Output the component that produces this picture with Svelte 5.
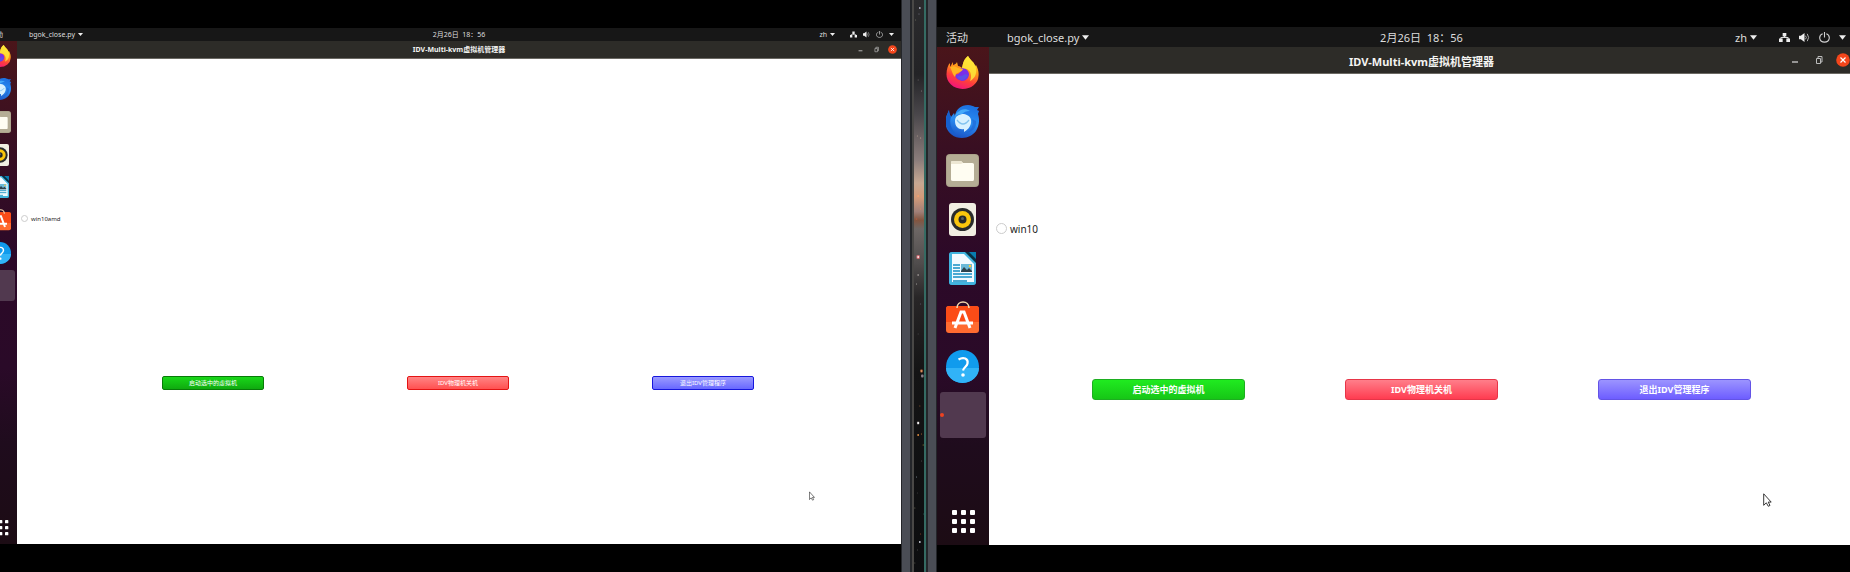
<script>
  const screens = [
    { id: 'small', vm: 'win10amd' },
    { id: 'large', vm: 'win10' }
  ];
  const apps = ['Firefox', 'Thunderbird', 'Files', 'Rhythmbox', 'Writer', 'Software', 'Help', 'Running'];
  const dots = [6, 15, 24];
  const stars = [
    [6, 8, 2, '#aab'], [5, 14, 1, '#889'], [1, 20, 1, '#776'], [12, 68, 1, '#8aa'],
    [4, 80, 1, '#776f70'], [8, 91, 1, '#8a8584'], [3, 136, 1, '#b5a090'], [7, 138, 1, '#d0b0a0'],
    [4, 196, 2, '#f0a070'], [7, 209, 1, '#e58b5a'], [2, 219, 2, '#a55c42'],
    [4, 257, 4, '#c96a70'], [4, 257, 2, '#ffe4e4'], [4, 275, 2, '#8a8583'], [2, 284, 1, '#c0bcb8'],
    [7, 304, 1, '#667'], [4, 334, 1, '#555'], [8, 371, 3, '#b96b3e'], [8, 371, 1, '#ffd0a0'],
    [9, 376, 3, '#8b7f8a'], [6, 406, 1, '#a06a3d'], [4, 423, 3, '#77716f'], [4, 423, 2, '#fff'],
    [4, 435, 2, '#d9883c'], [8, 434, 1, '#c17635'], [10, 445, 1, '#b7a544'], [8, 461, 1, '#555'],
    [2, 477, 1, '#8b9aa5'], [3, 493, 1, '#444'], [0, 508, 1, '#7c7a62'], [11, 514, 1, '#47a08c'],
    [7, 534, 1, '#9a5030'], [6, 542, 2, '#c4c8d4'], [3, 550, 1, '#555'], [0, 563, 1, '#665']
  ];
</script>

{#snippet appIcon(name, id)}
  <svg class="app-icon" viewBox="0 0 33 33" aria-hidden="true">
    {#if name === 'Firefox'}
      <defs>
        <linearGradient id="fx-{id}" x1="0.75" y1="0" x2="0.35" y2="1">
          <stop offset="0" stop-color="#fff22c" /><stop offset="0.4" stop-color="#ff9a1a" />
          <stop offset="0.7" stop-color="#ff3f3b" /><stop offset="1" stop-color="#f2127e" />
        </linearGradient>
      </defs>
      <path fill="url(#fx-{id})" d="M22 0c2 3 3 4 5 6 1 1 1.500 2 2 4l1-1c2 4 3 7 2.500 11A16 13.500 0 0 1 16.500 33 16 14.500 0 0 1 .500 18C.500 13 2 9 4 7v4l3-5v3c2-1 3-1 4-3l1 4c2 0 3 1 4 2 1-5 2-9 6-12z" />
      <path fill="#7b2ee8" d="M12 14c4-3 10-2 11 4 0 4-3 7-7 7-4-1-7-3-7-7 2 1 4 0 5-2z" />
      <path fill="#4c63e8" d="M11 19c2 2 6 1 8-1l3 1c-1 4-4 5-6 5-3 0-5-2-5-5z" opacity=".65" />
      <path fill="#ffb522" d="M4 11c3-1 5-1 8 1l5 1c-1 3-4 3-7 5l-1 3C6 18 6 14 4 11z" />
      <path fill="#ffe83a" d="M22 0c2 4 7 7 8 12 1 7-2 11-6 13 2-5 1-10-3-12l-5-1c1-5 2-9 6-12z" opacity=".85" />
    {:else if name === 'Thunderbird'}
      <defs>
        <linearGradient id="tb-{id}" x1="0.7" y1="0" x2="0.4" y2="1">
          <stop offset="0" stop-color="#1c6fe0" /><stop offset="0.5" stop-color="#2a8df2" />
          <stop offset="1" stop-color="#1a52c4" />
        </linearGradient>
      </defs>
      <path fill="url(#tb-{id})" d="M9 11C10 4 15 0 22 0c3 0 5 1 7 2l4 0-2 3 2 1-1 3c2 6 1 12-2 17-3 4-8 7-14 7C7 33 0 27-.500 18-.700 13 1 10 3 5c0 3 1 5 2 7l3-4z" />
      <path fill="#1560cf" d="M3 5c0 3 1 5 2 7-2 6 0 12 5 17C4 27 0 23-.500 18-.700 13 1 10 3 5z" />
      <path fill="#45a9fa" d="M12 7c3-3 8-4 12-1-4 0-6 1-8 3-4 0-6 1-7 3 0-2 1-4 3-5z" />
      <path fill="#1e62d2" d="M26 14c2 5 0 11-6 14 7-1 11-6 10-12z" opacity=".6" />
      <path fill="#d9f1ff" d="M9 16c0-5 4-7 9-7 5 1 8 4 7 9-1 5-4 7-7 9l0-3c-5 1-9-2-9-8z" />
      <path d="M11 15q6 8 12 0" fill="none" stroke="#83c3ef" stroke-width="1.300" />
    {:else if name === 'Files'}
      <rect x="0" y="0" width="33" height="33" rx="4" fill="#aaa28a" />
      <rect x="1" y="1" width="31" height="31" rx="3" fill="#b5ad95" />
      <path fill="#fffdf2" d="M5 9c0-2 1-2 2-2h8l2 2h9c2 0 2 1 2 2v14c0 2-1 2-2 2H7c-2 0-2-1-2-2z" />
      <path fill="#ede7d3" d="M5 9c0-2 1-2 2-2h8l2 2-2 1H5z" />
    {:else if name === 'Rhythmbox'}
      <rect x="3" y="0" width="27" height="33" rx="3" fill="#f1eee2" />
      <circle cx="16.500" cy="16.500" r="11.500" fill="#292b2b" />
      <circle cx="16.500" cy="16.500" r="8.500" fill="#fac60c" />
      <circle cx="16.500" cy="16.500" r="4" fill="#252828" />
      <circle cx="16.500" cy="15.500" r="1.500" fill="#575e60" />
    {:else if name === 'Writer'}
      <path fill="#087caf" d="M6 0h24v30c0 2-1 3-3 3H6c-2 0-3-1-3-3V3c0-2 1-3 3-3z" />
      <path fill="#42b4df" d="M6 0h14l10 10v20c0 2-1 3-3 3H6c-2 0-3-1-3-3V3c0-2 1-3 3-3z" />
      <path fill="#f3faff" d="M6 2h12l10 10v18H6z" />
      <path fill="#082f41" d="M19 0h4l7 7v4z" />
      <path d="M7 13h7M7 16h7M7 19h7M7 22h19M7 25h19M7 29h14" stroke="#168ec4" stroke-width="1.300" />
      <path fill="#6ab9d8" d="M15 12h11v8H15z" /><path fill="#2f424c" d="M15 19l3-4 3 3 2-2 3 3v1H15z" />
      <circle cx="24" cy="14" r="1.200" fill="#ffcb36" />
    {:else if name === 'Software'}
      <rect x="0" y="5" width="33" height="27" rx="3" fill="#ff6b30" />
      <path fill="#fb4c17" d="M3 5h27c2 0 3 1 3 3v13H0V8c0-2 1-3 3-3z" />
      <path d="M11 7c0-8 12-8 12 0" fill="none" stroke="#f4d9ae" stroke-width="1.600" />
      <path d="M9 27l6-16h3l6 16M6 22h21" fill="none" stroke="#fff" stroke-width="3" />
    {:else if name === 'Help'}
      <circle cx="16.500" cy="16.500" r="16.500" fill="#109bed" />
      <path fill="#31b3f7" d="M0 18h33a16.500 15 0 0 1-33 0z" />
      <path d="M12.500 9.500c5-3 10-1 9 4-.500 3-4 4-4.500 7" fill="none" stroke="#fff" stroke-width="2.200" />
      <circle cx="17" cy="25" r="1.800" fill="#fff" />
    {/if}
  </svg>
{/snippet}

{#snippet arrow()}
  <svg class="arrow" viewBox="0 0 8 5" aria-hidden="true"><path fill="#eee" d="M0 0h8L4 5z" /></svg>
{/snippet}

{#snippet desktop(screen)}
  <section class="screen {screen.id}">
    <header class="panel">
      <button class="activities">活动</button>
      <button class="app-menu">bgok_close.py {@render arrow()}</button>
      <time>2月26日&nbsp; 18：56</time>
      <div class="tray">
        <button class="lang">zh {@render arrow()}</button>
        <button class="status" aria-label="System">
          <svg viewBox="0 0 12 12" aria-hidden="true"><path fill="#eee" d="M4 1h4v4H4zM0 7h4v4H0zM8 7h4v4H8z" /><path d="M6 4v2M2 8V6h8v2" stroke="#eee" fill="none" /></svg>
          <svg viewBox="0 0 12 12" aria-hidden="true"><path fill="#eee" d="M0 4h2l4-3v10L2 8H0z" /><path d="M7 4q2 2 0 4M9 2q3 4 0 8" stroke="#bbb" fill="none" /></svg>
          <svg viewBox="0 0 12 12" aria-hidden="true"><path d="M4 2C-1 4 0 11 6 11s7-7 2-9M6 0v6" stroke="#d0d0d0" stroke-width="1.200" fill="none" /></svg>
          {@render arrow()}
        </button>
      </div>
    </header>
    <div class="desk">
      <nav class="dock" aria-label="Dock">
        <div class="apps">
          {#each apps as name}
            <button class:active={name === 'Running'} aria-label={name}>
              {#if name !== 'Running'}{@render appIcon(name, screen.id)}{/if}
            </button>
          {/each}
        </div>
        <button class="show-apps" aria-label="Applications">
          <svg class="app-icon" viewBox="0 0 33 33" aria-hidden="true">
            {#each dots as y}{#each dots as x}<rect {x} {y} width="5" height="5" rx="1" fill="#fff" />{/each}{/each}
          </svg>
        </button>
      </nav>
      <main class="window">
        <div class="titlebar">
          <span></span>
          <h1>IDV-Multi-kvm虚拟机管理器</h1>
          <div class="controls">
            <button aria-label="Minimize"><svg viewBox="0 0 14 14" aria-hidden="true"><path d="M4 9h6" stroke="#ddd" stroke-width="1.200" /></svg></button>
            <button aria-label="Restore"><svg viewBox="0 0 14 14" aria-hidden="true"><path d="M4.500 5.500h4v5h-4zM6 5V3.500h4V9H9" fill="none" stroke="#bbb" /></svg></button>
            <button aria-label="Close"><svg viewBox="0 0 14 14" aria-hidden="true"><circle cx="7" cy="7" r="6.800" fill="#f4461b" /><path d="M4.500 4.500l5 5m0-5l-5 5" stroke="#fff" stroke-width="1.200" /></svg></button>
          </div>
        </div>
        <div class="machines">
          <label><input type="radio" name="vm-{screen.id}" value={screen.vm} />{screen.vm}</label>
        </div>
        <div class="actions">
          <button class="start">启动选中的虚拟机</button>
          <button class="shutdown">IDV物理机关机</button>
          <button class="quit">退出IDV管理程序</button>
        </div>
        <svg class="pointer" viewBox="0 0 9 14" aria-hidden="true"><path d="M.700.800v11.500l2.600-2.500 2 3.500 1.700-.900-1.800-3.300h3z" fill="#fff" stroke="#222" stroke-width=".900" /></svg>
      </main>
    </div>
  </section>
{/snippet}

<div class="wall" lang="zh-CN">
  {@render desktop(screens[0])}
  <div class="divider">
    <i class="bezel"></i>
    <svg class="space" viewBox="0 0 12 572" preserveAspectRatio="none" aria-hidden="true">
      <defs>
        <linearGradient id="galaxy" x1="0" y1="0" x2="0" y2="1">
          <stop offset="0" stop-color="#2b2b2d" /><stop offset=".13" stop-color="#232326" />
          <stop offset=".2" stop-color="#4a474b" /><stop offset=".28" stop-color="#8b7d7b" />
          <stop offset=".32" stop-color="#c7a892" /><stop offset=".345" stop-color="#d39b79" />
          <stop offset=".37" stop-color="#a08078" /><stop offset=".385" stop-color="#83553f" />
          <stop offset=".4" stop-color="#6d6765" /><stop offset=".46" stop-color="#504d4d" />
          <stop offset=".52" stop-color="#282627" /><stop offset=".65" stop-color="#141415" />
          <stop offset="1" stop-color="#0c0d0f" />
        </linearGradient>
      </defs>
      <rect width="12" height="572" fill="url(#galaxy)" />
      {#each stars as [x, y, size, color]}
        <rect x={x - size / 2 + 1} y={y - size / 2} width={size} height={size} rx={size / 3} fill={color} />
      {/each}
    </svg>
    <i class="bezel second"></i>
  </div>
  {@render desktop(screens[1])}
</div>

<style>
  :global(body) { margin: 0; background: #000; }
  .wall {
    display: grid;
    grid-template-columns: 901fr 36px 913fr;
    min-height: 100vh;
    font-family: "Noto Sans", "Noto Sans CJK SC", sans-serif;
    background: #000;
  }
  button { border: 0; padding: 0; margin: 0; background: none; font: inherit; color: inherit; }
  svg { display: block; flex: none; }

  .screen { display: flex; flex-direction: column; min-width: 0; overflow: hidden; position: relative; }
  .small {
    --text: 7px; --label: 6px; --edge: 16px; --panel: 13px; --bar: 17px;
    --cell: 30px; --icon: 22px; --arrow: 5px; --tray: 7px; --tray-gap: 6px; --lang-gap: 15px;
    --menu: 12px; --control: 9px; --control-gap: 7px; --radio: 7px; --action: 102px; --action-h: 14px; --gap: 143px;
    --below: 154px; --apps: 260px; --space: 2px; --end: 7px;
    padding: 28px 0;
  }
  .large {
    --text: 11px; --label: 10px; --edge: 51px; --panel: 20px; --bar: 26px;
    --cell: 46px; --icon: 33px; --arrow: 7px; --tray: 11px; --tray-gap: 9px; --lang-gap: 22px;
    --menu: 18px; --control: 14px; --control-gap: 10px; --radio: 11px; --action: 153px; --action-h: 21px; --gap: 100px;
    --below: 145px; --apps: 389px; --space: 3px; --end: 4px;
    padding: 27px 0;
  }
  .panel {
    box-sizing: border-box;
    display: grid;
    grid-template-columns: calc(var(--edge) + 1px) 1fr auto 1fr;
    align-items: center;
    height: var(--panel);
    background: #171717;
    color: #ddd;
    font-size: var(--text);
    line-height: 1;
    white-space: nowrap;
  }
  .large .panel { padding-top: 1px; margin-right: -4px; }
  .large .tray { padding-right: 8px; }
  time { font-family: "Noto Sans", "Noto Sans CJK TC", sans-serif; }
  .activities { display: flex; }
  .large .activities { padding-left: 9px; }
  .small .activities { justify-content: flex-end; width: 3px; }
  .app-menu, .lang { display: flex; align-items: center; gap: 3px; }
  .app-menu { padding-left: var(--menu); }
  .tray { display: flex; justify-content: flex-end; align-items: center; gap: var(--lang-gap); padding-right: var(--end); }
  .status { display: flex; align-items: center; gap: var(--tray-gap); }
  .status svg { width: var(--tray); height: var(--tray); }
  .arrow, .status .arrow { width: var(--arrow); height: var(--arrow); }

  .desk { display: flex; flex: 1; min-height: 0; }
  .dock {
    box-sizing: border-box;
    width: calc(var(--edge) + 1px);
    flex: none;
    display: flex;
    flex-direction: column;
    align-items: center;
    background: linear-gradient(#4a151a, #390f22 20%, #2c0928 42%, #2a0a28 65%, #1f0c1d 80%, #1c0c14);
  }
  .small .dock { align-items: flex-end; padding-right: 2px; }
  .large .dock { padding-right: 1px; }
  .apps { display: grid; grid-auto-rows: 1fr; gap: var(--space); height: var(--apps); }
  .large .apps { padding-top: 2px; }
  .dock button { width: var(--cell); display: flex; align-items: center; justify-content: center; }
  .show-apps { height: var(--cell); margin-top: auto; margin-bottom: 2px; }
  .app-icon { width: var(--icon); height: var(--icon); }
  .dock .active { background: #51394f; border-radius: 3px; justify-content: flex-start; }
  .large .active::before { content: ""; width: 4px; height: 4px; border-radius: 50%; background: #ed4321; }

  .window { flex: 1; min-width: 0; display: flex; flex-direction: column; background: #fff; position: relative; }
  .large .window { margin-right: -4px; }
  .titlebar {
    display: grid;
    grid-template-columns: 1fr auto 1fr;
    align-items: center;
    height: var(--bar);
    border-bottom: 1px solid #6b6963;
    background: #2d2c28;
    color: #f4f4f2;
  }
  h1 { margin: 0; font-size: var(--text); line-height: 1; font-weight: 700; white-space: nowrap; }
  .large h1 { padding-top: 2px; }
  .controls { display: flex; justify-content: flex-end; gap: var(--control-gap); padding-right: 4px; }
  .controls svg { width: var(--control); height: var(--control); }
  .machines { flex: 1; display: flex; align-items: center; padding: 2px 0 0 4px; }
  .large .machines { padding-left: 7px; padding-top: 4px; }
  label { display: flex; align-items: center; gap: 3px; font-size: var(--label); line-height: 14px; color: #222; }
  input {
    appearance: none;
    box-sizing: border-box;
    width: var(--radio);
    height: var(--radio);
    margin: 0;
    border: 1px solid #ccc;
    border-radius: 50%;
    background: #fff;
  }
  .actions { display: flex; justify-content: center; gap: var(--gap); padding-bottom: var(--below); }
  .small .actions { padding-right: 2px; }
  .actions button {
    box-sizing: border-box;
    width: var(--action);
    height: var(--action-h);
    border: 1px solid;
    border-radius: 2px;
    color: #fff;
    font-size: 6px;
    line-height: 12px;
    white-space: nowrap;
  }
  .large .actions button { font-size: 9px; line-height: 19px; font-weight: 700; border-radius: 3px; }
  .small .start { background: linear-gradient(#19d719, #0faa0f); border-color: #087b08; }
  .small .shutdown { background: linear-gradient(#ff8585, #ff5050); border-color: #e41414; }
  .small .quit { background: linear-gradient(#9b9bff, #6868ff); border-color: #1717dc; }
  .large .start { background: linear-gradient(#20eb20, #16c616); border-color: #1dae20; }
  .large .shutdown { background: linear-gradient(#ff7e8a, #ff3c50); border-color: #e73548; }
  .large .quit { background: linear-gradient(#9c94ff, #6d5dff); border-color: #6353e6; }
  .pointer { position: absolute; width: 6px; height: 10px; right: 86px; bottom: 43px; }
  .large .pointer { width: 9px; height: 14px; right: 82px; bottom: 38px; }

  .divider { display: flex; background: #24262a; }
  .bezel { flex: none; width: 8px; margin-left: 1px; background: #4a4d55; }
  .bezel.second { margin-left: 2px; }
  .space { box-sizing: content-box; width: 10px; height: 100%; margin-left: 2px; border-left: 2px solid #494846; border-right: 2px solid #356b63; }
</style>
